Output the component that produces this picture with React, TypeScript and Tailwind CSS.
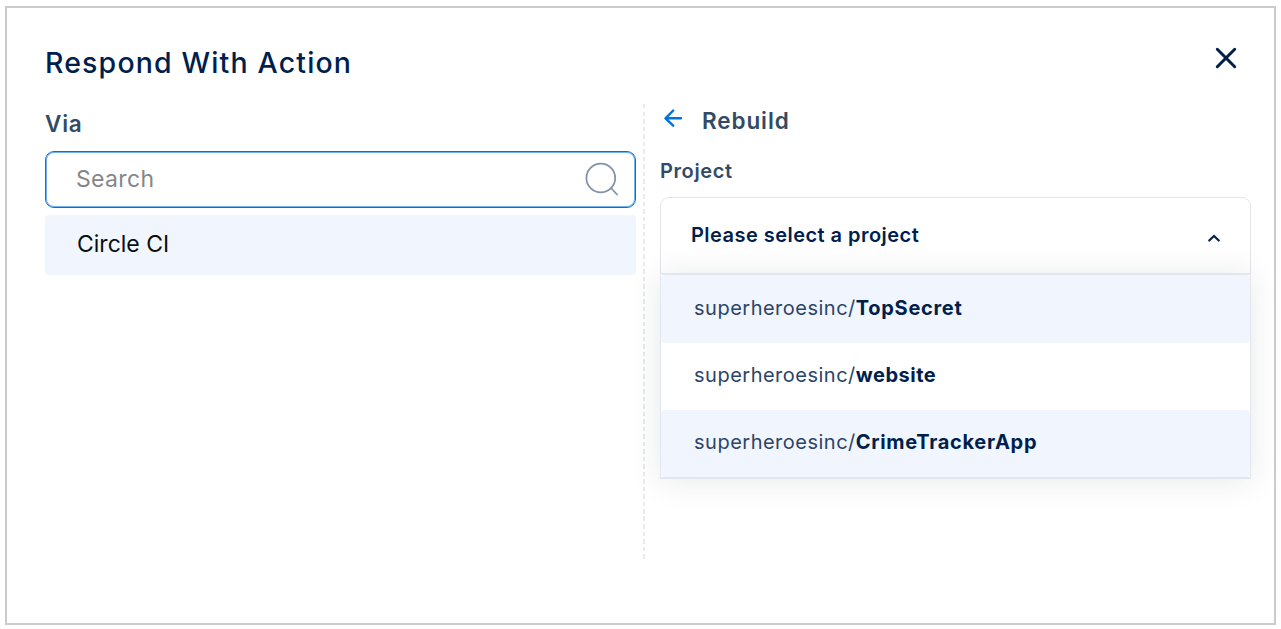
const projects = [
  { name: "TopSecret", tracking: "tracking-[0.7px]" },
  { name: "website", tracking: "tracking-[0.5px]" },
  { name: "CrimeTrackerApp", tracking: "tracking-[0.68px]" },
];

function SearchIcon() {
  return (
    <svg width="36" height="36" viewBox="0 0 36 36" fill="none" stroke="#8492aa" strokeWidth="1.8" strokeLinecap="round">
      <circle cx="16.8" cy="16" r="14.4" />
      <path d="M27 26 L33 32.5" />
    </svg>
  );
}

function BackIcon() {
  return (
    <svg width="20" height="20" viewBox="0 0 20 20" fill="none" stroke="#0073e0" strokeWidth="2.4" strokeLinecap="round" strokeLinejoin="round">
      <path d="M17 10.3 H2 M9.2 2.5 L1.5 10.3 L9.2 17.7" />
    </svg>
  );
}

function CloseIcon() {
  return (
    <svg width="24" height="24" viewBox="0 0 24 24" fill="none" stroke="#001f4d" strokeWidth="3" strokeLinecap="round">
      <path d="M3.3 3.3 L20.7 20.7 M20.7 3.3 L3.3 20.7" />
    </svg>
  );
}

function ChevronUp() {
  return (
    <svg width="14" height="10" viewBox="0 0 14 10" fill="none" stroke="#001f4d" strokeWidth="2.1" strokeLinecap="round">
      <path d="M2.2 7.6 L7 2.9 L11.8 7.6" />
    </svg>
  );
}

function ViaPanel() {
  return (
    <section className="w-[598px] shrink-0">
      <h2 className="mt-[6px] h-7 text-[22.5px] leading-7 font-semibold tracking-[0.8px] text-[#324a66]">Via</h2>
      <div className="mt-[13px] flex h-[57px] w-[591px] items-center justify-between rounded-[9px] border border-[#0073e0] pr-[15px] pl-[30px] shadow-[inset_0_0_0_1px_#6fb3f0]">
        <span className="pb-[2px] text-[23px] leading-7 tracking-[0.35px] text-[#868686]">Search</span>
        <SearchIcon />
      </div>
      <div className="mt-[7px] flex h-[60px] w-[591px] items-center rounded-[4px] bg-[#f1f6fe] pl-[32px]">
        <span className="pb-[2px] text-[23px] leading-7 text-[#0c0d10]">Circle CI</span>
      </div>
    </section>
  );
}

function ProjectPanel() {
  return (
    <section className="w-[591px] pt-px">
      <div className="flex h-7 items-center">
        <span className="ml-[4px] pb-[2px]"><BackIcon /></span>
        <h2 className="ml-[18px] pt-[3px] text-[22.5px] leading-7 font-semibold tracking-[0.9px] text-[#324a66]">Rebuild</h2>
      </div>
      <h3 className="mt-[26px] h-6 text-[20px] leading-6 font-semibold tracking-[0.6px] text-[#324a66]">Project</h3>
      <div className="mt-[14px] flex h-[77px] items-center justify-between rounded-t-[9px] border border-[#e3e5ea] pr-[29px] pl-[30px]">
        <span className="pb-[2px] text-[20px] leading-6 font-semibold tracking-[0.46px] text-[#001f4d]">Please select a project</span>
        <span className="pt-1"><ChevronUp /></span>
      </div>
      <ul className="-mt-px border border-t-2 border-b-2 border-[#e3e6ec] bg-white shadow-[0_2px_30px_rgba(20,40,50,0.1)]">
        {projects.map((p) => (
          <li key={p.name} className="flex h-[67px] items-center rounded-[4px] pb-[3px] pl-[33px] text-[20px] leading-6 first:h-[68px] first:pb-[2px] odd:bg-[#f1f6fe]">
            <span className="tracking-[0.5px] text-[#2b4468]">superheroesinc/</span>
            <span className={"font-bold text-[#001f4d] " + p.tracking}>{p.name}</span>
          </li>
        ))}
      </ul>
    </section>
  );
}

export default function App() {
  return (
    <div className="h-[629px] w-[1281px] overflow-hidden bg-white pt-[6px] pl-[5px] font-['Inter',sans-serif]">
      <main className="h-[619px] w-[1271px] border-2 border-[#cbcbcb] bg-white pl-[38px]">
        <header className="flex h-[96px] items-start justify-between pr-[36px]">
          <h1 className="mt-[37px] text-[28.5px] leading-9 font-medium tracking-[1.15px] text-[#001f4d]">Respond With Action</h1>
          <button aria-label="Close" className="mt-[38px]"><CloseIcon /></button>
        </header>
        <div className="flex">
          <ViaPanel />
          <div className="mr-[15px] h-[456px] w-[2px] shrink-0 bg-[repeating-linear-gradient(to_bottom,#e8eaee_0px,#e8eaee_4.5px,transparent_4.5px,transparent_7.5px)]" />
          <ProjectPanel />
        </div>
      </main>
    </div>
  );
}
